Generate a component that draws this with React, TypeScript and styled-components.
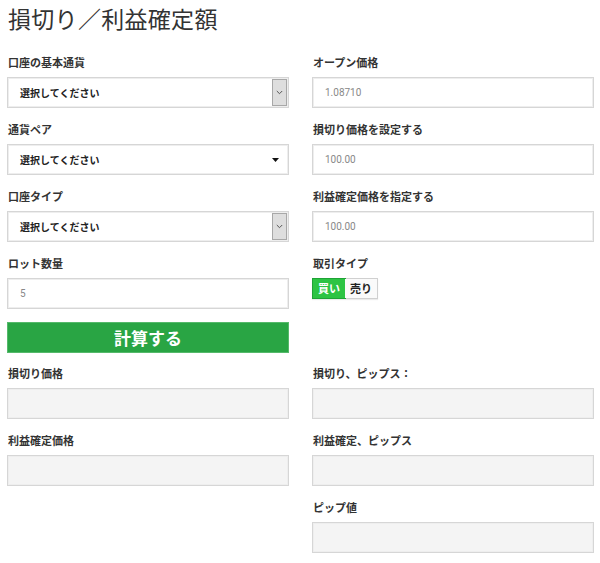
import React, { useState } from "react";
import styled, { createGlobalStyle } from "styled-components";

const Global = createGlobalStyle`
  html, body { margin: 0; padding: 0; background: #fff; }
  body { font-family: "Noto Sans CJK JP", "Noto Sans", sans-serif; color: #333; }
`;

const Page = styled.div`
  padding: 0 6px 0 7px;
  width: 600px;
  box-sizing: border-box;
`;

const Title = styled.h1`
  margin: 0 0 18px 1px;
  font-size: 23px;
  line-height: 36px;
  font-weight: 400;
  color: #333;
  letter-spacing: 0.3px;
`;

const Grid = styled.div`
  display: grid;
  grid-template-columns: 1fr 1fr;
  column-gap: 23px;
`;

const Field = styled.div`
  display: flex;
  flex-direction: column;
  gap: 7px;
  padding-bottom: 13px;
`;

const Label = styled.div`
  font-size: 11px;
  line-height: 16px;
  font-weight: 700;
  color: #333;
  padding-left: 1px;
`;

const Box = styled.div<{ $readonly?: boolean }>`
  height: 31px;
  box-sizing: border-box;
  border: 1px solid #d6d6d6;
  box-shadow: inset 0 0 0 1px #eeeeee;
  background: ${(p) => (p.$readonly ? "#f4f4f4" : "#fff")};
  display: flex;
  align-items: center;
`;

const SelectText = styled.span`
  flex: 1;
  padding-left: 12px;
  font-size: 10px;
  font-weight: 700;
  color: #222;
`;

const ArrowButton = styled.span`
  align-self: stretch;
  width: 13px;
  margin: 1px;
  background: #dedede;
  border: 1px solid #a8a8a8;
  display: flex;
  align-items: center;
  justify-content: center;
`;

const Caret = styled.span`
  width: 16px;
  display: flex;
  align-items: center;
  justify-content: flex-start;
`;

const Value = styled.span`
  padding-left: 12px;
  font-family: Roboto, "Noto Sans", sans-serif;
  font-size: 10px;
  color: #888;
`;

const CalcButton = styled.button`
  height: 31px;
  margin-bottom: 12px;
  border: 1px solid #55b96b;
  background: #29a544;
  color: #fff;
  font-family: "Noto Sans CJK JP", sans-serif;
  font-size: 17px;
  font-weight: 700;
  line-height: 1;
  padding: 0;
  cursor: pointer;
`;

const Toggle = styled.div`
  display: flex;
  align-self: flex-start;
  border: 1px solid #d0d0d0;
  box-shadow: 0 1px 1px rgba(0, 0, 0, 0.08);
`;

const ToggleItem = styled.button<{ $active?: boolean }>`
  height: 19px;
  padding: 0 5px;
  border: none;
  outline: ${(p) => (p.$active ? "1px solid #1fa336" : "none")};
  background: ${(p) => (p.$active ? "#2cc443" : "#fafafa")};
  color: ${(p) => (p.$active ? "#fff" : "#222")};
  font-family: "Noto Sans CJK JP", sans-serif;
  font-size: 11px;
  font-weight: 700;
  line-height: 19px;
  cursor: pointer;
`;

const Empty = styled.div``;

const Chevron = () => (
  <svg width="7" height="5" viewBox="0 0 7 5">
    <path d="M0.8 1 L3.5 3.7 L6.2 1" fill="none" stroke="#555" strokeWidth="1" />
  </svg>
);

const Triangle = () => (
  <svg width="7" height="4" viewBox="0 0 7 4">
    <path d="M0 0 H7 L3.5 4 Z" fill="#111" />
  </svg>
);

const SelectField = ({ label, variant }: { label: string; variant: "native" | "caret" }) => (
  <Field>
    <Label>{label}</Label>
    <Box>
      <SelectText>選択してください</SelectText>
      {variant === "native" ? (
        <ArrowButton>
          <Chevron />
        </ArrowButton>
      ) : (
        <Caret>
          <Triangle />
        </Caret>
      )}
    </Box>
  </Field>
);

const InputField = ({ label, value }: { label: string; value: string }) => (
  <Field>
    <Label>{label}</Label>
    <Box>
      <Value>{value}</Value>
    </Box>
  </Field>
);

const ResultField = ({ label }: { label: string }) => (
  <Field>
    <Label>{label}</Label>
    <Box $readonly />
  </Field>
);

export default function App() {
  const [side, setSide] = useState<"buy" | "sell">("buy");
  return (
    <Page>
      <Global />
      <Title>損切り／利益確定額</Title>
      <Grid>
        <SelectField label="口座の基本通貨" variant="native" />
        <InputField label="オープン価格" value="1.08710" />

        <SelectField label="通貨ペア" variant="caret" />
        <InputField label="損切り価格を設定する" value="100.00" />

        <SelectField label="口座タイプ" variant="native" />
        <InputField label="利益確定価格を指定する" value="100.00" />

        <InputField label="ロット数量" value="5" />
        <Field>
          <Label>取引タイプ</Label>
          <Toggle>
            <ToggleItem $active={side === "buy"} onClick={() => setSide("buy")}>
              買い
            </ToggleItem>
            <ToggleItem $active={side === "sell"} onClick={() => setSide("sell")}>
              売り
            </ToggleItem>
          </Toggle>
        </Field>

        <CalcButton>計算する</CalcButton>
        <Empty />

        <ResultField label="損切り価格" />
        <ResultField label="損切り、ピップス：" />

        <ResultField label="利益確定価格" />
        <ResultField label="利益確定、ピップス" />

        <Empty />
        <ResultField label="ピップ値" />
      </Grid>
    </Page>
  );
}
